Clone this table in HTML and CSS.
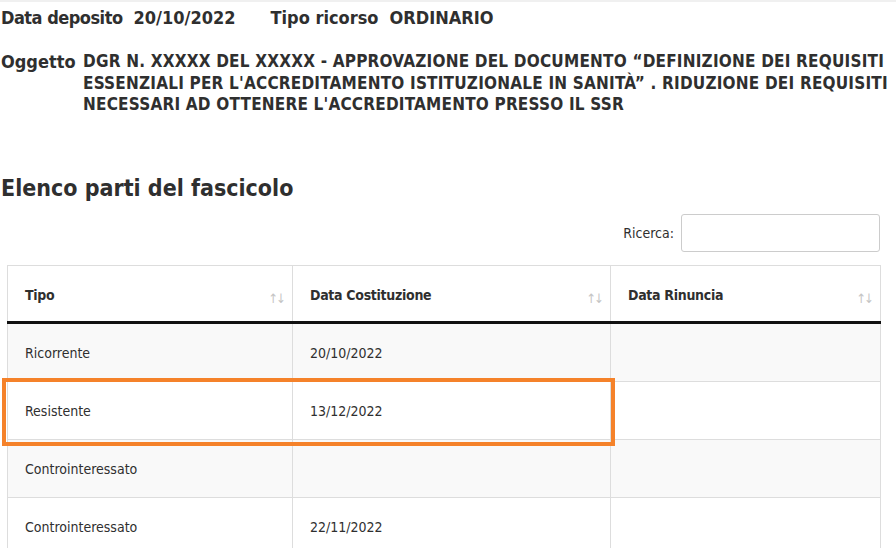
FILE: index.html
```html
<!DOCTYPE html>
<html lang="it">
<head>
    <meta charset="UTF-8">
    <title>Fascicolo</title>
    <link rel="stylesheet" href="styles.css">
</head>
<body>
    <div class="page">
        <div class="info">
            <span class="label">Data deposito</span>
            <span class="value">20/10/2022</span>
            <span class="label second">Tipo ricorso</span>
            <span class="value">ORDINARIO</span>
        </div>

        <div class="oggetto">
            <span class="label">Oggetto</span>
            <div class="oggetto-text">
                <div>DGR N. XXXXX DEL XXXXX - APPROVAZIONE DEL DOCUMENTO “DEFINIZIONE DEI REQUISITI</div>
                <div>ESSENZIALI PER L'ACCREDITAMENTO ISTITUZIONALE IN SANITÀ” . RIDUZIONE DEI REQUISITI</div>
                <div>NECESSARI AD OTTENERE L'ACCREDITAMENTO PRESSO IL SSR</div>
            </div>
        </div>

        <h2 class="title">Elenco parti del fascicolo</h2>

        <div class="search">
            <label for="q">Ricerca:</label>
            <input type="text" id="q">
        </div>

        <div class="table-wrap">
            <table class="parti">
                <thead>
                    <tr>
                        <th class="col-tipo">Tipo <span class="sort">↑↓</span></th>
                        <th class="col-cost">Data Costituzione <span class="sort">↑↓</span></th>
                        <th>Data Rinuncia <span class="sort">↑↓</span></th>
                    </tr>
                </thead>
                <tbody>
                    <tr><td>Ricorrente</td><td>20/10/2022</td><td></td></tr>
                    <tr><td>Resistente</td><td>13/12/2022</td><td></td></tr>
                    <tr><td>Controinteressato</td><td></td><td></td></tr>
                    <tr><td>Controinteressato</td><td>22/11/2022</td><td></td></tr>
                </tbody>
            </table>
            <div class="highlight"></div>
        </div>
    </div>
</body>
</html>
```

FILE: styles.css
```css
body {
    margin: 0;
    font-family: "DejaVu Sans Condensed", "DejaVu Sans", sans-serif;
    color: #2f2f2f;
    background: #fff;
    border-top: 2px solid #f0f0f0;
}
.page {
    padding: 0 16px 0 1px;
}
.info {
    display: flex;
    font-weight: bold;
    font-size: 18px;
    padding-top: 6px;
    line-height: 20px;
}
.info .label:first-child {
    letter-spacing: -0.5px;
}
.info .value {
    margin-left: 11px;
}
.info .second {
    margin-left: 35px;
}
.oggetto {
    display: flex;
    font-weight: bold;
    font-size: 18px;
    line-height: 21px;
    margin-top: 23px;
}
.oggetto .label {
    flex: none;
    width: 82px;
}
.oggetto-text {
    font-size: 17px;
    line-height: 21.5px;
    white-space: nowrap;
    letter-spacing: 0.2px;
}
.title {
    font-size: 23px;
    margin: 57px 0 0;
    line-height: 30px;
}
.search {
    display: flex;
    justify-content: flex-end;
    align-items: center;
    margin-top: 11px;
    font-size: 14px;
}
.search input {
    width: 199px;
    height: 38px;
    box-sizing: border-box;
    border: 1px solid #ccc;
    border-radius: 3px;
    margin-left: 7px;
}
.table-wrap {
    position: relative;
    margin: 13px 0 0 6px;
}
.parti {
    width: 874px;
    border-collapse: collapse;
    font-size: 14px;
}
.parti th, .parti td {
    border: 1px solid #ddd;
    text-align: left;
    padding: 2px 17px 0;
}
.parti th {
    position: relative;
    height: 52px;
    padding-top: 3px;
    font-size: 14px;
    letter-spacing: -0.3px;
    border-bottom: 3px solid #111;
}
.col-tipo { width: 250px; }
.col-cost { width: 283px; }
.sort {
    position: absolute;
    right: 8px;
    top: 25px;
    color: #c4c4c4;
    font-weight: normal;
    font-size: 13px;
    letter-spacing: -2px;
}
.parti td {
    height: 55px;
}
.parti tbody tr:nth-child(odd) {
    background: #f9f9f9;
}
.highlight {
    position: absolute;
    left: -5px;
    top: 113px;
    width: 605px;
    height: 60px;
    border: 4px solid #f5822a;
}
```
